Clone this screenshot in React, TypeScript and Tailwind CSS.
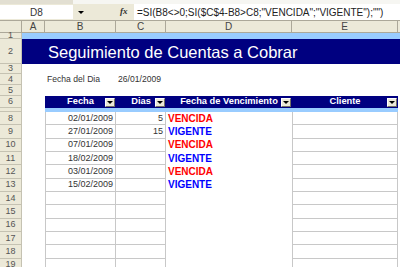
import React from 'react';

type Fila = { fecha: string; dias: string; estado: string };

const filas: Fila[] = [
  { fecha: '02/01/2009', dias: '5', estado: 'VENCIDA' },
  { fecha: '27/01/2009', dias: '15', estado: 'VIGENTE' },
  { fecha: '07/01/2009', dias: '', estado: 'VENCIDA' },
  { fecha: '18/02/2009', dias: '', estado: 'VIGENTE' },
  { fecha: '03/01/2009', dias: '', estado: 'VENCIDA' },
  { fecha: '15/02/2009', dias: '', estado: 'VIGENTE' },
  { fecha: '', dias: '', estado: '' },
  { fecha: '', dias: '', estado: '' },
  { fecha: '', dias: '', estado: '' },
  { fecha: '', dias: '', estado: '' },
  { fecha: '', dias: '', estado: '' },
  { fecha: '', dias: '', estado: '' },
];

function RowNum({ n }: { n?: number }) {
  return (
    <div className="w-[22px] shrink-0 h-full bg-[#ece9d8] border-r border-b border-[#c5c2b2] flex items-center justify-center text-[9px] leading-none text-[#555]">
      {n}
    </div>
  );
}

function FilterBtn() {
  return (
    <span className="absolute right-[1px] bottom-[1px] w-[10px] h-[9px] bg-[#ece9d8] border border-t-white border-l-white border-r-[#716f64] border-b-[#716f64] flex items-center justify-center">
      <span className="w-0 h-0 border-l-[3px] border-r-[3px] border-t-[3px] border-l-transparent border-r-transparent border-t-black" />
    </span>
  );
}

function HeadCell({ w, label }: { w: string; label: string }) {
  return (
    <div className={`${w} shrink-0 h-full relative bg-[#000080] text-white font-bold text-[9.3px] leading-none flex items-center justify-center`}>
      {label}
      <FilterBtn />
    </div>
  );
}

export default function App() {
  return (
    <div className="w-[400px] h-[267px] overflow-hidden bg-white font-['Liberation_Sans',Arial,sans-serif] text-black">
      {/* toolbar remnant */}
      <div className="h-[4px] flex">
        <div className="w-[73px] bg-[#e2dfd2]" />
        <div className="flex-1 bg-[#f6f6f2]" />
      </div>

      {/* formula bar */}
      <div className="h-[16px] flex bg-[#ece9d8]">
        <div className="w-[73px] h-[14px] mt-[1px] bg-white flex items-center justify-center text-[10px] text-[#333]">D8</div>
        <div className="w-[16px] flex items-center justify-center">
          <span className="w-0 h-0 border-l-[3px] border-r-[3px] border-t-[3px] border-l-transparent border-r-transparent border-t-black" />
        </div>
        <div className="flex-1" />
        <div className="w-[14px] flex items-center text-[9px] italic font-bold font-['Liberation_Serif',serif] text-[#333]">fx</div>
        <div className="w-[266px] bg-white flex items-center pl-[3px] text-[10px] text-[#222] whitespace-nowrap">
          =SI(B8&lt;&gt;0;SI($C$4-B8&gt;C8;"VENCIDA";"VIGENTE");"")
        </div>
      </div>

      {/* column letters */}
      <div className="h-[13px] flex bg-[#ece9d8] border-t border-[#aca899] text-[10px] leading-none text-[#444]">
        <div className="w-[22px] shrink-0 border-r border-b border-[#aca899]" />
        {[
          ['w-[23px]', 'A'],
          ['w-[71px]', 'B'],
          ['w-[50px]', 'C'],
          ['w-[126px]', 'D'],
          ['w-[106px]', 'E'],
        ].map(([w, l]) => (
          <div key={l} className={`${w} shrink-0 border-r border-b border-[#aca899] flex items-center justify-center`}>
            {l}
          </div>
        ))}
        <div className="flex-1 border-b border-[#aca899]" />
      </div>

      {/* row 1 */}
      <div className="h-[6px] flex">
        <RowNum n={1} />
        <div className="flex-1 bg-[#99ccff]" />
      </div>

      {/* row 2 : title */}
      <div className="h-[25px] flex">
        <RowNum n={2} />
        <div className="flex-1 bg-[#000080] flex items-center pl-[26px] pt-[2px] text-white text-[16.5px] leading-none whitespace-nowrap">
          Seguimiento de Cuentas a Cobrar
        </div>
      </div>

      {/* row 3 */}
      <div className="h-[10px] flex">
        <RowNum n={3} />
      </div>

      {/* row 4 */}
      <div className="h-[11px] flex text-[8.6px] leading-none text-[#333]">
        <RowNum n={4} />
        <div className="w-[23px] shrink-0" />
        <div className="w-[73px] shrink-0 flex items-center pl-[2px]">Fecha del Dia</div>
        <div className="flex items-center">26/01/2009</div>
      </div>

      {/* row 5 */}
      <div className="h-[11px] flex">
        <RowNum n={5} />
      </div>

      {/* row 6 : table header */}
      <div className="h-[12px] flex">
        <RowNum n={6} />
        <div className="w-[23px] shrink-0" />
        <HeadCell w="w-[71px]" label="Fecha" />
        <HeadCell w="w-[50px]" label="Dias" />
        <HeadCell w="w-[126px]" label="Fecha de Vencimiento" />
        <HeadCell w="w-[106px]" label="Cliente" />
      </div>

      {/* row 7 */}
      <div className="h-[4px] flex">
        <RowNum />
        <div className="w-[23px] shrink-0" />
        <div className="w-[353px] shrink-0 bg-[#99ccff]" />
      </div>

      {/* data rows */}
      {filas.map((f, i) => (
        <div key={i} className="h-[13.333px] flex">
          <RowNum n={8 + i} />
          <div className="w-[23px] shrink-0" />
          <div className="w-[71px] shrink-0 border-l border-r border-b border-[#c8c8c8] flex items-center justify-end pr-[2px] text-[9px] leading-none text-[#333]">
            {f.fecha}
          </div>
          <div className="w-[50px] shrink-0 border-r border-b border-[#c8c8c8] flex items-center justify-end pr-[2px] text-[9px] leading-none text-[#333]">
            {f.dias}
          </div>
          <div
            className={`w-[126px] shrink-0 flex items-center pl-[2px] text-[10px] font-bold leading-none ${
              f.estado === 'VENCIDA' ? 'text-[#ff0000]' : 'text-[#0000ff]'
            }`}
          >
            {f.estado}
          </div>
          <div className="w-[106px] shrink-0 border-l border-r border-b border-[#c8c8c8]" />
        </div>
      ))}
    </div>
  );
}
